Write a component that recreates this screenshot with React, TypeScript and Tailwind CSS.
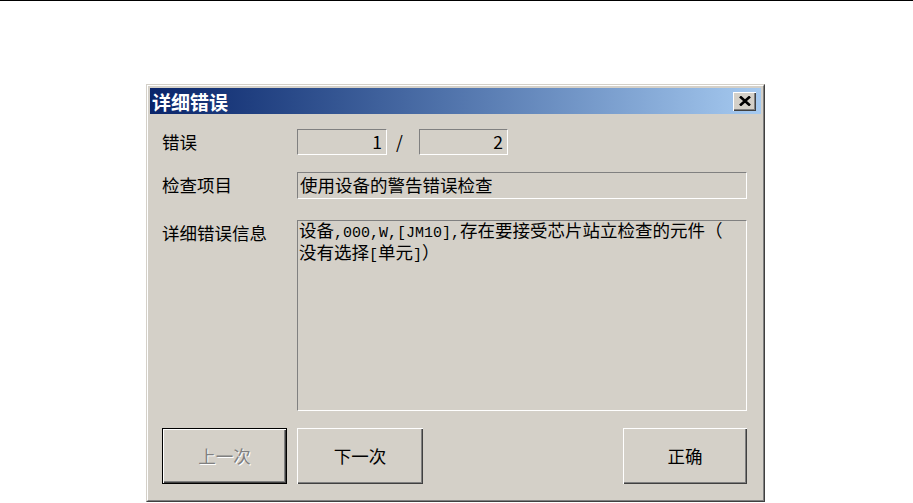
const raised =
  "shadow-[inset_1px_1px_0_#ffffff,inset_-1px_-1px_0_#404040,inset_-2px_-2px_0_#808080]";
const sunken = "border border-t-[#808080] border-l-[#808080] border-b-white border-r-white";

function Mono({ children }: { children: React.ReactNode }) {
  return <span className="font-['Liberation_Mono',monospace] text-[15px] leading-[18px]">{children}</span>;
}

function CloseButton() {
  return (
    <div className={`flex h-[19px] w-[23px] items-center justify-center bg-[#d4d0c8] ${raised}`}>
      <svg width="12" height="10" viewBox="0 0 12 10">
        <path d="M1 0.5 L11 9.5 M11 0.5 L1 9.5" stroke="#000" strokeWidth="2.6" fill="none" />
      </svg>
    </div>
  );
}

function Button({ label, width, primary, disabled }: { label: string; width: string; primary?: boolean; disabled?: boolean }) {
  return (
    <div
      className={`flex h-[56px] items-center justify-center bg-[#d4d0c8] text-[17.5px] ${width} ${raised} ${
        primary ? "border border-black" : ""
      } ${disabled ? "text-[#808080] [text-shadow:1px_1px_0_#ffffff]" : "text-black"}`}
    >
      {label}
    </div>
  );
}

export default function App() {
  return (
    <div className="min-h-screen bg-white font-['Noto_Sans_CJK_SC',sans-serif] text-black">
      <div className="h-px bg-black" />
      <div className="pl-[146px] pt-[83px]">
        <div className="h-[418px] w-[619px] border border-t-[#d4d0c8] border-l-[#d4d0c8] border-b-[#404040] border-r-[#404040] bg-[#d4d0c8]">
          <div className="flex h-full flex-col border border-t-white border-l-white border-b-[#808080] border-r-[#808080] p-[2px]">
            {/* title bar */}
            <div className="flex h-[26px] items-center justify-between bg-gradient-to-r from-[#0a246a] to-[#a6caf0] pl-[2px] pr-[5px]">
              <span className="text-[19px] font-bold leading-none text-white">详细错误</span>
              <CloseButton />
            </div>

            <div className="flex flex-1 flex-col pl-[12px] pr-[14px] text-[17.5px]">
              <div className="mt-[15px] flex h-[26px] items-center">
                <span className="w-[135px]">错误</span>
                <div className={`flex h-[26px] w-[90px] items-center justify-end pr-[4px] ${sunken}`}>1</div>
                <span className="w-[32px] pl-[9px]">/</span>
                <div className={`flex h-[26px] w-[89px] items-center justify-end pr-[4px] ${sunken}`}>2</div>
              </div>

              <div className="mt-[17px] flex h-[27px] items-center">
                <span className="w-[135px]">检查项目</span>
                <div className={`flex h-[27px] flex-1 items-center pl-[2px] ${sunken}`}>使用设备的警告错误检查</div>
              </div>

              <div className="mt-[21px] flex h-[191px] items-start">
                <span className="w-[135px] leading-[26px]">详细错误信息</span>
                <div className={`h-full flex-1 whitespace-nowrap pl-[1px] text-[17.5px] leading-[18px] ${sunken}`}>
                  设备<Mono>,000,W,[JM10],</Mono>存在要接受芯片站立检查的元件（
                  <br />
                  没有选择<Mono>[</Mono>单元<Mono>]</Mono>）
                </div>
              </div>

              <div className="mt-[17px] flex items-center">
                <Button label="上一次" width="w-[125px]" primary disabled />
                <div className="ml-[10px]">
                  <Button label="下一次" width="w-[126px]" />
                </div>
                <div className="ml-auto">
                  <Button label="正确" width="w-[124px]" />
                </div>
              </div>
            </div>
          </div>
        </div>
      </div>
    </div>
  );
}
